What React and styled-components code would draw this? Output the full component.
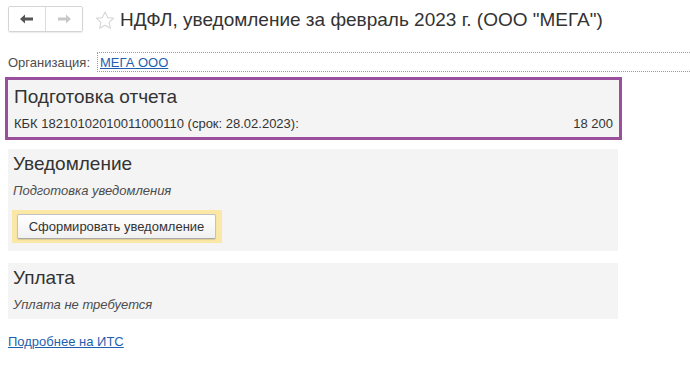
import React from 'react'
import styled, { createGlobalStyle } from 'styled-components'

const Global = createGlobalStyle`
  body {
    margin: 0;
    background: #fff;
    font-family: "Liberation Sans", Arial, sans-serif;
    color: #333;
  }
`

function App() {
  return (
    <Page>
      <Global />
      <Header>
        <NavGroup>
          <NavButton>
            <svg width="14" height="10" viewBox="0 0 14 10">
              <path d="M0 5 L5 0.5 L5 3.5 L13 3.5 L13 6.5 L5 6.5 L5 9.5 Z" fill="#555" />
            </svg>
          </NavButton>
          <NavButton>
            <svg width="14" height="10" viewBox="0 0 14 10">
              <path d="M14 5 L9 0.5 L9 3.5 L1 3.5 L1 6.5 L9 6.5 L9 9.5 Z" fill="#c8c8c8" />
            </svg>
          </NavButton>
        </NavGroup>
        <Star>
          <svg width="20" height="19" viewBox="0 0 20 19">
            <path d="M10 1 L12.6 6.6 L18.7 7.2 L14.1 11.3 L15.4 17.3 L10 14.2 L4.6 17.3 L5.9 11.3 L1.3 7.2 L7.4 6.6 Z"
              fill="none" stroke="#d6d6d6" strokeWidth="1.1" strokeLinejoin="round" />
          </svg>
        </Star>
        <Title>НДФЛ, уведомление за февраль 2023 г. (ООО "МЕГА")</Title>
      </Header>

      <OrgRow>
        <OrgLabel>Организация:</OrgLabel>
        <OrgField>
          <Link href="#">МЕГА ООО</Link>
        </OrgField>
      </OrgRow>

      <ActiveSection>
        <SectionTitle>Подготовка отчета</SectionTitle>
        <KbkRow>
          <span>КБК 18210102010011000110 (срок: 28.02.2023):</span>
          <span>18 200</span>
        </KbkRow>
      </ActiveSection>

      <Section $top={9} $bottom={8}>
        <SectionTitle>Уведомление</SectionTitle>
        <Note>Подготовка уведомления</Note>
        <ButtonFrame>
          <Button>Сформировать уведомление</Button>
        </ButtonFrame>
      </Section>

      <Section $top={12} $bottom={6}>
        <SectionTitle>Уплата</SectionTitle>
        <Note>Уплата не требуется</Note>
      </Section>

      <Footer>
        <Link href="#">Подробнее на ИТС</Link>
      </Footer>
    </Page>
  )
}

export default App

const Page = styled.div`
  width: 690px;
  height: 384px;
  overflow: hidden;
  background: #fff;
`

const Header = styled.div`
  display: flex;
  align-items: center;
  padding: 7px 0 0 8px;
  height: 24px;
`

const NavGroup = styled.div`
  display: flex;
  height: 24px;
  border: 1px solid #d4d4d4;
  border-radius: 2px;
  box-shadow: 0 1px 1px rgba(0, 0, 0, 0.08);
`

const NavButton = styled.div`
  width: 36px;
  display: flex;
  align-items: center;
  justify-content: center;
  background: #fff;
  & + & {
    border-left: 1px solid #dcdcdc;
  }
`

const Star = styled.div`
  display: flex;
  margin: 2px 0 0 12px;
`

const Title = styled.div`
  margin: 2px 0 0 5px;
  font-size: 19px;
  color: #333;
  white-space: nowrap;
`

const OrgRow = styled.div`
  display: flex;
  align-items: center;
  margin-top: 21px;
  padding-left: 8px;
`

const OrgLabel = styled.div`
  font-size: 13px;
  color: #4d4d4d;
  width: 89px;
`

const OrgField = styled.div`
  flex: 1;
  height: 18px;
  border-top: 1px dotted #9a9a9a;
  border-bottom: 1px dotted #9a9a9a;
  border-left: 1px dotted #9a9a9a;
  padding-left: 2px;
  display: flex;
  align-items: center;
`

const Link = styled.a`
  font-size: 13px;
  color: #1f5fad;
  text-decoration: underline;
`

const ActiveSection = styled.div`
  background: #f4f4f4;
  width: 599px;
  margin: 5px 0 0 5px;
  padding: 6px 6px 5px 6px;
  border: 3px solid #9a4f9c;
`

const Section = styled.div`
  background: #f4f4f4;
  width: 600px;
  margin: ${p => p.$top}px 0 0 8px;
  padding: 4px 5px ${p => p.$bottom}px 5px;
`

const SectionTitle = styled.div`
  font-size: 19px;
  color: #333;
  line-height: 22px;
`

const KbkRow = styled.div`
  display: flex;
  justify-content: space-between;
  font-size: 13px;
  color: #333;
  margin-top: 8px;
  line-height: 16px;
`

const Note = styled.div`
  font-size: 13px;
  font-style: italic;
  color: #4d4d4d;
  margin-top: 8px;
  line-height: 16px;
`

const ButtonFrame = styled.div`
  display: flex;
  width: fit-content;
  margin: 11px 0 0 -1px;
  padding: 4px 6px 4px 5px;
  background: #fbe8a6;
`

const Button = styled.div`
  width: 197px;
  height: 23px;
  border: 1px solid #c2c2c2;
  border-bottom-color: #a8a8a8;
  border-radius: 2px;
  background: linear-gradient(#ffffff, #f1f1f1);
  box-shadow: 0 1px 1px rgba(0, 0, 0, 0.12);
  display: flex;
  align-items: center;
  justify-content: center;
  font-size: 13px;
  color: #333;
`

const Footer = styled.div`
  padding: 13px 0 0 8px;
`
